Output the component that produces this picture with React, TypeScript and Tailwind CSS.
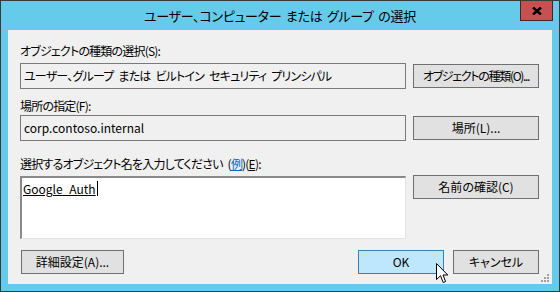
import type { ReactNode } from "react"

const Button = ({ children, className = "" }: { children: ReactNode; className?: string }) => (
  <div
    className={`flex items-center justify-center whitespace-nowrap border border-[#707070] bg-[#e1e1e1] text-[12px] leading-none text-black ${className}`}
  >
    {children}
  </div>
)

const Label = ({ children, className = "" }: { children: ReactNode; className?: string }) => (
  <div className={`h-[16px] whitespace-nowrap text-[12px] leading-[16px] tracking-[-0.8px] [word-spacing:3px] text-black ${className}`}>
    {children}
  </div>
)

const App = () => {
  return (
    <div className="relative w-[560px] h-[292px] border border-[#3a3a3a] bg-[#66cbea] font-['Noto_Sans_CJK_JP',sans-serif] [font-feature-settings:'palt'] overflow-hidden">
      {/* title bar */}
      <div className="h-[29px] flex items-center justify-center text-[13px] tracking-[-0.3px] [word-spacing:2px] text-black pt-[1px]">
        ユーザー、コンピューター または グループ の選択
      </div>
      <div className="absolute top-[-1px] right-[6px] w-[33px] h-[21px] border border-[#4a2424] bg-[#c75050] flex items-center justify-center">
        <svg width="10" height="8" viewBox="0 0 10 8">
          <path d="M1 0.5 L9 7.5 M9 0.5 L1 7.5" stroke="#000" strokeWidth="2.4" />
        </svg>
      </div>

      {/* body */}
      <div className="px-[7px]">
        <div className="relative h-[254px] bg-[#f0f0f0] flex flex-col pl-[12px] pr-[13px]">
          <Label className="mt-[13px]">オブジェクトの種類の選択(S):</Label>
          <div className="mt-[4px] flex items-start gap-[7px]">
            <div className="w-[386px] h-[26px] border border-[#7a7a7a] pl-[3px] text-[12px] leading-[24px] tracking-[-0.8px] [word-spacing:3px] text-black whitespace-nowrap">
              ユーザー、グループ または ビルトイン セキュリティ プリンシパル
            </div>
            <Button className="mt-[1px] w-[126px] h-[24px] tracking-[-1.3px]">オブジェクトの種類(O)...</Button>
          </div>

          <Label className="mt-[9px]">場所の指定(F):</Label>
          <div className="mt-[1px] flex items-start gap-[7px]">
            <div className="w-[386px] h-[26px] border border-[#7a7a7a] pl-[3px] text-[12px] leading-[24px] text-black">
              corp.contoso.internal
            </div>
            <Button className="mt-[1px] w-[126px] h-[24px]">場所(L)...</Button>
          </div>

          <Label className="mt-[15px]">
            選択するオブジェクト名を入力してください (<span className="text-[#0066cc] underline">例</span>)(<span className="underline">E</span>):
          </Label>
          <div className="mt-[3px] flex items-start gap-[7px]">
            <div className="mt-[1px] w-[386px] h-[63px] border-t-2 border-l-2 border-t-[#8a8a8a] border-l-[#8a8a8a] border-r border-b border-r-[#e3e3e3] border-b-[#e3e3e3] bg-white pl-[1px] pt-[2px]">
              <div className="flex items-center h-[17px] text-[12px] leading-[17px] text-black">
                <span className="underline">Google_Auth</span>
                <span className="ml-[1px] w-[1px] h-[15px] bg-black" />
              </div>
            </div>
            <Button className="w-[126px] h-[24px]">名前の確認(C)</Button>
          </div>

          <div className="mt-[11px] flex items-start">
            <Button className="ml-[1px] w-[103px] h-[24px]">詳細設定(A)...</Button>
            <div className="flex-1" />
            <div className="w-[86px] h-[24px] border border-[#3c7fb1] bg-[#bee6fd] flex items-center justify-center text-[12px] leading-none text-black">
              OK
            </div>
            <Button className="ml-[9px] w-[86px] h-[24px]">キャンセル</Button>
          </div>

          {/* resize grip */}
          <svg className="absolute right-[2px] bottom-[1px]" width="10" height="10" viewBox="0 0 10 10">
            <g fill="#a0a0a0">
              <rect x="7" y="1" width="2" height="2" />
              <rect x="4" y="4" width="2" height="2" />
              <rect x="7" y="4" width="2" height="2" />
              <rect x="1" y="7" width="2" height="2" />
              <rect x="4" y="7" width="2" height="2" />
              <rect x="7" y="7" width="2" height="2" />
            </g>
          </svg>
        </div>
      </div>

      {/* mouse cursor */}
      <svg className="absolute left-[435px] top-[262px]" width="13" height="21" viewBox="0 0 13 21">
        <path
          d="M0.5 0.5 L0.5 16.5 L4.5 12.7 L7.2 19.5 L9.6 18.5 L7 12 L11.8 12 Z"
          fill="#fff"
          stroke="#000"
          strokeWidth="1"
          strokeLinejoin="miter"
        />
      </svg>
    </div>
  )
}

export default App
